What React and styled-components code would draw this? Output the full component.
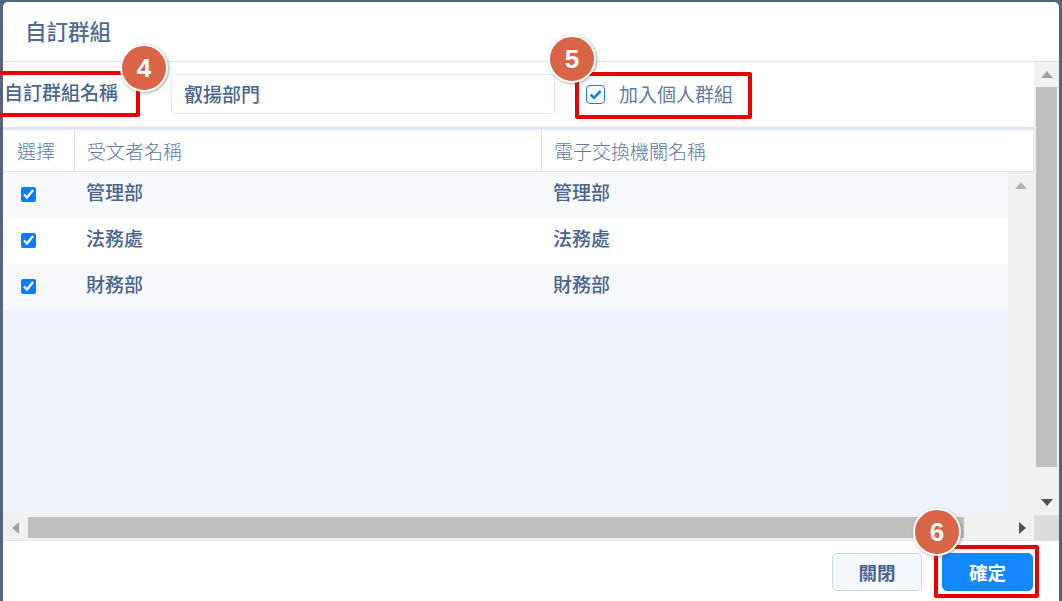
import React from "react";
import styled, { createGlobalStyle } from "styled-components";

const GlobalStyle = createGlobalStyle`
  html, body {
    margin: 0;
    padding: 0;
    background: #56637f;
    font-family: "Noto Sans CJK TC", "Noto Sans", sans-serif;
  }
`;

const Page = styled.div`
  position: relative;
  width: 1062px;
  height: 601px;
  overflow: hidden;
  padding: 2px 3px 0;
  box-sizing: border-box;
  background: #56637f;
`;

const Modal = styled.div`
  display: flex;
  flex-direction: column;
  height: 605px;
  background: #fff;
  border-radius: 5px;
`;

const Header = styled.div`
  flex: 0 0 60px;
  box-sizing: border-box;
  display: flex;
  align-items: center;
  padding: 0 0 3px 22px;
  font-size: 21.5px;
  font-weight: 500;
  color: #4f6a96;
  border-bottom: 1px solid #dbe4f0;
`;

const Body = styled.div`
  flex: 0 0 479px;
  box-sizing: border-box;
  display: grid;
  grid-template-columns: 1031px 25px;
  grid-template-rows: 453px 25px;
  border-bottom: 1px solid #dbe4f0;
`;

const Content = styled.div`
  display: flex;
  flex-direction: column;
  min-height: 0;
`;

const FormRow = styled.div`
  flex: 0 0 67px;
  box-sizing: border-box;
  display: flex;
  align-items: center;
  border-bottom: 2px solid #dbe4f0;
`;

const FieldLabel = styled.label`
  flex: 0 0 168px;
  padding: 0 0 6px 1px;
  box-sizing: border-box;
  font-size: 19px;
  font-weight: 500;
  color: #4a6491;
  line-height: 26px;
`;

const NameInput = styled.input`
  flex: 0 0 384px;
  height: 40px;
  box-sizing: border-box;
  padding: 0 12px 2px;
  margin-bottom: 1px;
  border: 1px solid #dfe7f2;
  border-radius: 5px;
  outline: none;
  font: 500 19px "Noto Sans CJK TC", sans-serif;
  color: #4a6491;
`;

const PersonalCheck = styled.div`
  display: flex;
  align-items: center;
  gap: 14px;
  margin: 0 0 2px 31px;
  font-size: 19px;
  color: #5f7aa3;
`;

const CheckFrame = styled.span`
  display: flex;
  align-items: center;
  justify-content: center;
  width: 19px;
  height: 19px;
  margin-top: 1px;
  box-sizing: border-box;
  border: 1px solid #1a82ea;
  border-radius: 4px;
  background: #fff;
`;

const Table = styled.div`
  flex: 1;
  display: flex;
  flex-direction: column;
  min-height: 0;
  background: #edf2fb;
`;

const HeadRow = styled.div`
  flex: 0 0 43px;
  box-sizing: border-box;
  display: grid;
  grid-template-columns: 71px 467px 1fr;
  background: #fff;
  border-top: 1px solid #e3e9f3;
  border-bottom: 1px solid #dbe4f0;
  border-right: 1px solid #e3e9f3;
`;

const HeadCell = styled.div`
  display: flex;
  align-items: center;
  padding-left: ${({ $pad }) => $pad}px;
  font-size: 19px;
  font-weight: 300;
  color: #5f7aa3;
  border-left: ${({ $divider }) => ($divider ? "1px solid #dbe4f0" : "none")};
`;

const TableScroll = styled.div`
  flex: 1;
  display: grid;
  grid-template-columns: 1005px 1fr;
  min-height: 0;
`;

const Rows = styled.div`
  display: flex;
  flex-direction: column;
`;

const Row = styled.div`
  flex: 0 0 46px;
  display: grid;
  grid-template-columns: 71px 467px 1fr;
  background: ${({ $striped }) => ($striped ? "#f7f9fd" : "#fff")};
`;

const PickCell = styled.div`
  display: flex;
  align-items: center;
  padding-left: 18px;
`;

const RowCheck = styled.input`
  width: 15px;
  height: 15px;
  margin: 0 0 1px 0;
  accent-color: #0a7cff;
`;

const TextCell = styled.div`
  padding: 7px 0 0 12px;
  font-size: 19px;
  line-height: 26px;
  font-weight: 500;
  color: #4a6491;
`;

const ScrollTrack = styled.div`
  display: flex;
  flex-direction: ${({ $horizontal }) => ($horizontal ? "row" : "column")};
  align-items: center;
  background: #f1f1f1;
`;

const ArrowButton = styled.span`
  flex: 0 0 ${({ $size }) => $size}px;
  display: flex;
  align-items: center;
  justify-content: center;
`;

const ThumbV = styled.div`
  width: 21px;
  flex: 0 0 380px;
  background: #bfbfbf;
`;

const ThumbH = styled.div`
  height: 21px;
  flex: 0 0 936px;
  background: #bfbfbf;
`;

const Spacer = styled.div`
  flex: 1;
`;

const Corner = styled.div`
  background: #dcdcdc;
`;

const Footer = styled.div`
  flex: 1;
  display: flex;
  align-items: flex-start;
  justify-content: flex-end;
  gap: 20px;
  padding: 12px 26px 0 0;
`;

const Button = styled.button`
  width: ${({ $primary }) => ($primary ? "91px" : "90px")};
  height: 38px;
  padding: 0;
  border: 1px solid ${({ $primary }) => ($primary ? "#1488ff" : "#ccd8e8")};
  border-radius: 5px;
  background: ${({ $primary }) => ($primary ? "#1488ff" : "#f5f8fe")};
  color: ${({ $primary }) => ($primary ? "#fff" : "#4a6491")};
  font: 700 18.5px "Noto Sans CJK TC", sans-serif;
`;

// red annotation frames and numbered badges lie over the dialog
const Callout = styled.div`
  position: absolute;
  left: ${({ $x }) => $x}px;
  top: ${({ $y }) => $y}px;
  width: ${({ $w }) => $w}px;
  height: ${({ $h }) => $h}px;
  box-sizing: border-box;
  border: 4px solid #ea0000;
  border-radius: 2px;
`;

const Badge = styled.div`
  position: absolute;
  left: ${({ $x }) => $x - 24}px;
  top: ${({ $y }) => $y - 24}px;
  width: 48px;
  height: 48px;
  box-sizing: border-box;
  display: flex;
  align-items: center;
  justify-content: center;
  border: 2px solid #fff;
  border-radius: 50%;
  background: #d96546;
  box-shadow: 1px 1px 3px rgba(60, 60, 60, 0.45);
  color: #fff;
  font: 700 26px "Liberation Sans", sans-serif;
`;

const Arrow = ({ dir, color = "#a3a3a3" }) => {
  const points = {
    up: "0,8 6,1 12,8",
    down: "0,1 12,1 6,8",
    left: "8,0 8,12 1,6",
    right: "1,0 1,12 8,6",
  }[dir];
  const vertical = dir === "up" || dir === "down";
  return (
    <svg width={vertical ? 12 : 9} height={vertical ? 9 : 12} viewBox={vertical ? "0 0 12 9" : "0 0 9 12"}>
      <polygon points={points} fill={color} />
    </svg>
  );
};

const recipients = ["管理部", "法務處", "財務部"];

const App = () => (
  <Page>
    <GlobalStyle />
    <Modal>
      <Header>自訂群組</Header>
      <Body>
        <Content>
          <FormRow>
            <FieldLabel>自訂群組名稱</FieldLabel>
            <NameInput defaultValue="叡揚部門" />
            <PersonalCheck>
              <CheckFrame>
                <svg width="13" height="11" viewBox="0 0 13 11">
                  <path d="M1.5 5.5 L5 8.8 L11.5 2" fill="none" stroke="#1a82ea" strokeWidth="2.6" />
                </svg>
              </CheckFrame>
              加入個人群組
            </PersonalCheck>
          </FormRow>
          <Table>
            <HeadRow>
              <HeadCell $pad={14}>選擇</HeadCell>
              <HeadCell $pad={12} $divider>受文者名稱</HeadCell>
              <HeadCell $pad={12} $divider>電子交換機關名稱</HeadCell>
            </HeadRow>
            <TableScroll>
              <Rows>
                {recipients.map((name, i) => (
                  <Row key={name} $striped={i % 2 === 0}>
                    <PickCell>
                      <RowCheck type="checkbox" defaultChecked />
                    </PickCell>
                    <TextCell>{name}</TextCell>
                    <TextCell>{name}</TextCell>
                  </Row>
                ))}
              </Rows>
              <ScrollTrack>
                <ArrowButton $size={26}>
                  <Arrow dir="up" color="#b4b4b4" />
                </ArrowButton>
              </ScrollTrack>
            </TableScroll>
          </Table>
        </Content>
        <ScrollTrack>
          <ArrowButton $size={25}>
            <Arrow dir="up" />
          </ArrowButton>
          <ThumbV />
          <Spacer />
          <ArrowButton $size={26}>
            <Arrow dir="down" color="#505050" />
          </ArrowButton>
        </ScrollTrack>
        <ScrollTrack $horizontal>
          <ArrowButton $size={25}>
            <Arrow dir="left" />
          </ArrowButton>
          <ThumbH />
          <Spacer />
          <ArrowButton $size={24}>
            <Arrow dir="right" color="#505050" />
          </ArrowButton>
        </ScrollTrack>
        <Corner />
      </Body>
      <Footer>
        <Button>關閉</Button>
        <Button $primary>確定</Button>
      </Footer>
    </Modal>
    <Callout $x={-6} $y={71} $w={146} $h={46} />
    <Callout $x={575} $y={72} $w={177} $h={47} />
    <Callout $x={934} $y={545} $w={105} $h={53} />
    <Badge $x={144} $y={68}>4</Badge>
    <Badge $x={572} $y={59}>5</Badge>
    <Badge $x={937} $y={532}>6</Badge>
  </Page>
);

export default App;
